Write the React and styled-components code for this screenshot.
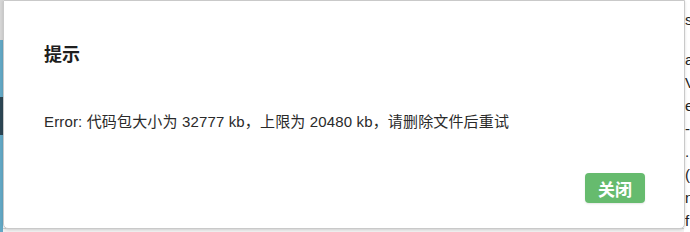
import React from 'react'
import styled, { createGlobalStyle } from 'styled-components'

const GlobalStyle = createGlobalStyle`
	html, body {
		margin: 0;
		padding: 0;
		background: #ffffff;
	}
	body {
		font-family: "Liberation Sans", "Noto Sans CJK SC", sans-serif;
	}
`

const sideLetters = ['s', '', 'a', 'V', 'e', '-', '.', '(', 'n', 'f']

function App() {
	return (
		<>
			<GlobalStyle />
			<Page>
				<Backdrop>
					<LeftStrip>
						<StripPart $h={40} $color="#d6d6d6" />
						<StripPart $h={57} $color="#63a8c5" />
						<StripPart $h={38} $color="#2c4654" />
						<StripPart $h={97} $color="#63a8c5" />
					</LeftStrip>
					<Middle>
						<BottomLine />
					</Middle>
					<RightStrip>
						{sideLetters.map((l, i) => (
							<SideLine key={i}>{l}</SideLine>
						))}
					</RightStrip>
				</Backdrop>

				<Dialog>
					<Title>提示</Title>
					<Message>Error: 代码包大小为 32777 kb，上限为 20480 kb，请删除文件后重试</Message>
					<Footer>
						<CloseButton>关闭</CloseButton>
					</Footer>
				</Dialog>
			</Page>
		</>
	)
}

export default App

const Page = styled.div`
	position: relative;
	width: 690px;
	height: 232px;
	overflow: hidden;
`

const Backdrop = styled.div`
	display: flex;
	height: 100%;
`

const LeftStrip = styled.div`
	width: 3px;
	display: flex;
	flex-direction: column;
`

const StripPart = styled.div`
	height: ${p => p.$h}px;
	background: ${p => p.$color};
`

const Middle = styled.div`
	flex: 1;
	display: flex;
	flex-direction: column;
	justify-content: flex-end;
	background: #ffffff;
`

const BottomLine = styled.div`
	height: 3px;
	background: #f2f2f2;
	border-top: 1px solid #d0d0d0;
`

const RightStrip = styled.div`
	width: 5px;
	padding-top: 8px;
	padding-left: 1px;
	display: flex;
	flex-direction: column;
	overflow: hidden;
	background: #ffffff;
`

const SideLine = styled.div`
	height: 23px;
	font-size: 15px;
	line-height: 23px;
	color: #222;
	white-space: nowrap;
`

const Dialog = styled.div`
	position: absolute;
	left: 3px;
	top: 0;
	width: 682px;
	height: 229px;
	box-sizing: border-box;
	display: flex;
	flex-direction: column;
	padding: 41px 39px 25px 40px;
	background: #ffffff;
	border: 1px solid #c9c9c9;
	border-radius: 0 0 5px 5px;
	box-shadow: 0 1px 3px rgba(0, 0, 0, 0.15);
`

const Title = styled.h4`
	margin: 0;
	font-size: 18px;
	line-height: 26px;
	font-weight: 700;
	color: #1f1f1f;
`

const Message = styled.p`
	margin: 43px 0 0;
	font-size: 15px;
	line-height: 22px;
	letter-spacing: 0.15px;
	color: #2a2a2a;
`

const Footer = styled.div`
	display: flex;
	justify-content: flex-end;
	margin-top: auto;
`

const CloseButton = styled.button`
	width: 60px;
	height: 30px;
	padding: 0;
	border: none;
	border-radius: 4px;
	background: #66bb6e;
	color: #ffffff;
	font-family: "Noto Sans CJK SC", sans-serif;
	font-size: 17px;
	font-weight: 700;
	box-shadow: 0 1px 2px rgba(0, 0, 0, 0.1);
	cursor: pointer;
`
